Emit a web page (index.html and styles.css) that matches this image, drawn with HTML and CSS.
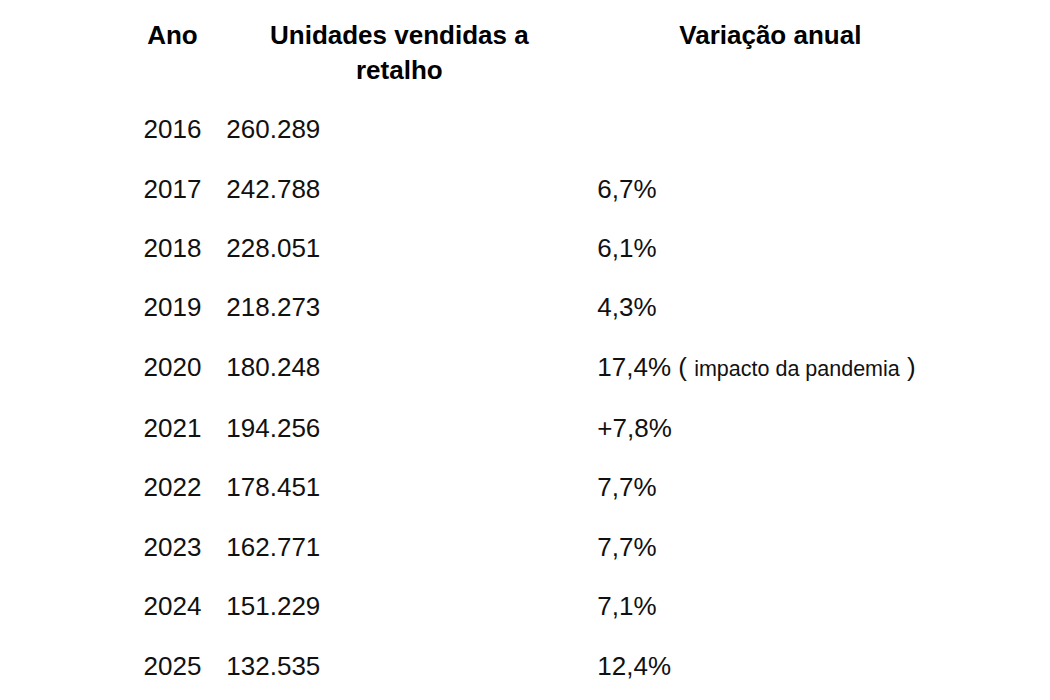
FILE: index.html
```html
<!DOCTYPE html>
<html lang="pt">
<head>
<meta charset="utf-8">
<title>Vendas a retalho</title>
<link rel="stylesheet" href="styles.css">
</head>
<body>
<table class="sales">
  <thead>
    <tr>
      <th class="c-year">Ano</th>
      <th class="c-units">Unidades vendidas a retalho</th>
      <th class="c-var">Variação anual</th>
    </tr>
  </thead>
  <tbody>
    <tr><td>2016</td><td>260.289</td><td></td></tr>
    <tr><td>2017</td><td>242.788</td><td>6,7%</td></tr>
    <tr><td>2018</td><td>228.051</td><td>6,1%</td></tr>
    <tr><td>2019</td><td>218.273</td><td>4,3%</td></tr>
    <tr><td>2020</td><td>180.248</td><td>17,4% ( <span class="note">impacto da pandemia</span> )</td></tr>
    <tr><td>2021</td><td>194.256</td><td>+7,8%</td></tr>
    <tr><td>2022</td><td>178.451</td><td>7,7%</td></tr>
    <tr><td>2023</td><td>162.771</td><td>7,7%</td></tr>
    <tr><td>2024</td><td>151.229</td><td>7,1%</td></tr>
    <tr><td>2025</td><td>132.535</td><td>12,4%</td></tr>
  </tbody>
</table>
</body>
</html>
```

FILE: styles.css
```css
html, body {
  margin: 0;
  padding: 0;
  background: #ffffff;
}

body {
  font-family: "Liberation Sans", Arial, sans-serif;
  color: #111111;
}

.sales {
  border-collapse: collapse;
  margin: 4px 0 0 131px;
  font-size: 26px;
}

.sales th {
  font-weight: bold;
  text-align: center;
  vertical-align: top;
  line-height: 35px;
  padding: 13.6px 12.5px 12.4px;
  color: #000000;
}

.sales td {
  text-align: left;
  vertical-align: top;
  line-height: 35px;
  padding: 12.2px 12.5px;
  white-space: nowrap;
}

.c-units,
.c-var {
  width: 346px;
}

.note {
  font-size: 21.5px;
}
```
